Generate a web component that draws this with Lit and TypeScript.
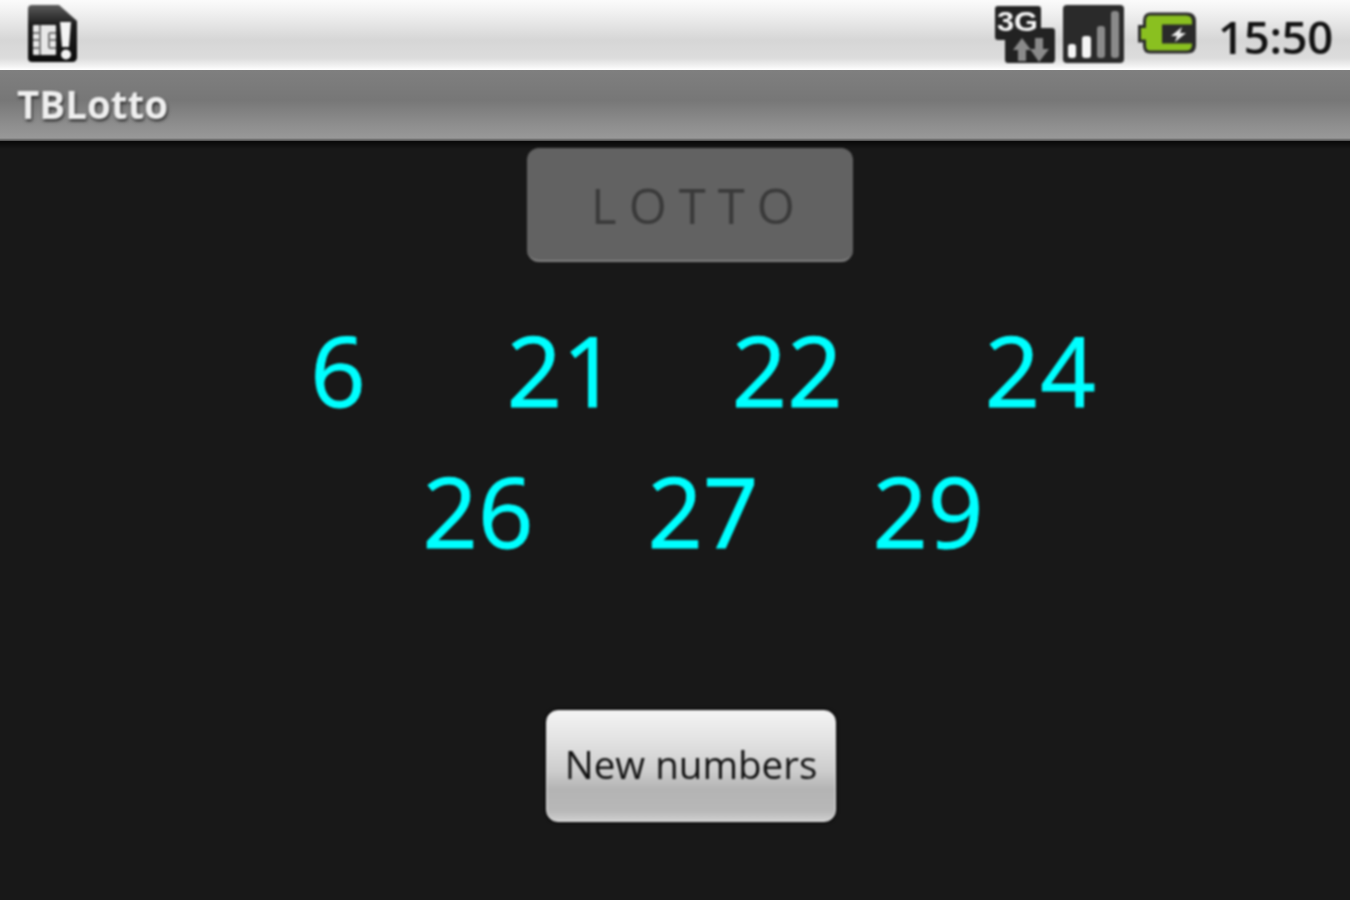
import { LitElement, html, css } from 'lit';
import { customElement } from 'lit/decorators.js';

// each number carries the gap to the one before it, the source layout is uneven
const ROWS = [
  [
    { n: '6', gap: 0 },
    { n: '21', gap: 141 },
    { n: '22', gap: 114 },
    { n: '24', gap: 142 },
  ],
  [
    { n: '26', gap: 0 },
    { n: '27', gap: 114 },
    { n: '29', gap: 114 },
  ],
];

@customElement('app-root')
export class AppRoot extends LitElement {
  static styles = css`
    :host {
      display: block;
      width: 1350px;
      height: 900px;
      overflow: hidden;
      background: #181818;
      font-family: 'Open Sans', 'Noto Sans', sans-serif;
    }
    .screen {
      height: 900px;
      display: flex;
      flex-direction: column;
    }
    /* the reference is an upscaled phone capture, everything but the bars is soft */
    .icon,
    .time,
    .label,
    .lotto,
    .row,
    .new {
      filter: blur(1px);
    }
    .status {
      height: 70px;
      box-sizing: border-box;
      flex: none;
      display: flex;
      align-items: center;
      padding: 0 17px 3px 27px;
      background: linear-gradient(#fbfbfb 0, #f1f1f1 12px, #d6d6d6 40px, #dcdcdc 58px, #f2f2f2 66px, #ffffff 70px);
    }
    .spacer {
      flex: 1;
    }
    .icon {
      display: block;
      flex: none;
    }
    .sim {
      width: 52px;
      height: 60px;
    }
    .net {
      width: 62px;
      height: 60px;
      margin-right: 7px;
    }
    .signal {
      width: 64px;
      height: 60px;
      margin-right: 11px;
    }
    .battery {
      width: 62px;
      height: 48px;
      margin-right: 18px;
    }
    .time {
      font-size: 45.5px;
      font-weight: 600;
      letter-spacing: -0.3px;
      color: #111;
      line-height: 60px;
      margin-top: 5px;
    }
    .title {
      height: 71px;
      box-sizing: border-box;
      flex: none;
      display: flex;
      align-items: center;
      padding: 0 0 3px 17px;
      background: linear-gradient(#7f7f7f 0, #777 30px, #8e8e8e 55px, #989898 68px, #4a4a4a 71px);
      color: #efefef;
      font-size: 38.5px;
      font-weight: 700;
      text-shadow: 1px 2px 3px #222;
    }
    .content {
      flex: 1;
      display: flex;
      flex-direction: column;
      align-items: center;
      background: linear-gradient(#080808 0, #181818 8px);
    }
    .lotto {
      box-sizing: border-box;
      width: 326px;
      height: 114px;
      margin-top: 7px;
      margin-left: 29px;
      display: flex;
      align-items: center;
      justify-content: center;
      padding: 2px 0 0 19px;
      border-radius: 12px;
      border-bottom: 2px solid #808080;
      background: #626262;
      color: #3a3a3a;
      font-size: 49px;
      letter-spacing: 12px;
    }
    .numbers {
      margin-top: 38px;
      margin-left: 56px;
      display: flex;
      flex-direction: column;
      align-items: center;
      gap: 2px;
    }
    .row {
      display: flex;
      height: 139px;
      align-items: center;
      color: #00ffff;
      font-size: 97px;
      line-height: 139px;
      -webkit-text-stroke: 1px #00ffff;
    }
    .new {
      box-sizing: border-box;
      width: 290px;
      height: 112px;
      margin-top: 130px;
      margin-left: 32px;
      display: flex;
      align-items: center;
      justify-content: center;
      padding-bottom: 4px;
      border-radius: 12px;
      border: 1px solid #eee;
      background: linear-gradient(#f4f4f4 0, #e2e2e2 30px, #cdcdcd 60px, #b4b4b4 78px, #b8b8b8 100px, #d4d4d4 112px);
      box-shadow: 0 0 2px 1px #000;
      color: #111;
      font-size: 38.5px;
    }
    .net-label {
      font-family: 'Liberation Sans', sans-serif;
      font-size: 27px;
      font-weight: 700;
      fill: #f6f6f6;
    }
  `;

  render() {
    return html`
      <div class="screen">
        <div class="status">
          ${this.simIcon()}
          <div class="spacer"></div>
          ${this.netIcon()} ${this.signalIcon()} ${this.batteryIcon()}
          <div class="time">15:50</div>
        </div>
        <div class="title"><span class="label">TBLotto</span></div>
        <div class="content">
          <div class="lotto">LOTTO</div>
          <div class="numbers">
            ${ROWS.map(
              (row) => html`
                <div class="row">
                  ${row.map((item) => html`<span style="margin-left:${item.gap}px">${item.n}</span>`)}
                </div>
              `,
            )}
          </div>
          <div class="new">New numbers</div>
        </div>
      </div>
    `;
  }

  simIcon() {
    return html`
      <svg class="icon sim" viewBox="0 0 52 60">
        <defs>
          <linearGradient id="simBody" x1="0" y1="0" x2="0" y2="1">
            <stop offset="0" stop-color="#5a5a5a" />
            <stop offset="0.35" stop-color="#1c1c1c" />
            <stop offset="1" stop-color="#0c0c0c" />
          </linearGradient>
        </defs>
        <path d="M1 5q0-4 4-4h27l18 16v36q0 5-5 5H5q-4 0-4-4z" fill="url(#simBody)" />
        <rect x="6" y="21" width="23" height="30" rx="1" fill="#e8e8e8" />
        <path d="M6 29h7M22 29h7M6 36h7M22 36h7M6 44h7M22 44h7M13 21v30M22 29v15" stroke="#777" stroke-width="2" />
        <path d="M33 18h11l-2 25h-7z" fill="#f4f4f4" />
        <circle cx="39" cy="50.5" r="5" fill="#f4f4f4" />
      </svg>
    `;
  }

  netIcon() {
    return html`
      <svg class="icon net" viewBox="0 0 62 60">
        <path d="M1 5q0-3 3-3h40q3 0 3 3v19h11q3 0 3 3v28q0 4-3 4H14q-3 0-3-3V36H4q-3 0-3-3z" fill="#222" />
        <text class="net-label" x="3" y="27" textLength="41" lengthAdjust="spacingAndGlyphs">3G</text>
        <path d="M24 57V46h-5l9-12 9 12h-5v11z" fill="#8a8a8a" />
        <path d="M41 34h8v11h6l-10 13-9-13h5z" fill="#8a8a8a" />
      </svg>
    `;
  }

  signalIcon() {
    return html`
      <svg class="icon signal" viewBox="0 0 64 60">
        <rect x="0" y="1" width="61" height="58" rx="4" fill="#2a2a2a" />
        <rect x="5" y="40" width="8" height="14" rx="3" fill="#f6f6f6" />
        <rect x="19" y="32" width="9" height="22" rx="3" fill="#f6f6f6" />
        <rect x="34" y="22" width="8" height="32" rx="3" fill="#8a8a8a" />
        <rect x="48" y="7" width="8" height="47" rx="3" fill="#8a8a8a" />
      </svg>
    `;
  }

  batteryIcon() {
    return html`
      <svg class="icon battery" viewBox="0 0 62 48">
        <path d="M12 2.5h37q9 0 9 9v24q0 8-9 8H12q-7 0-7-8v-3H0V15h5v-4q0-8 7-8.500z" fill="#2a2a2a" />
        <path d="M12 5.500h36q6 0 6 6v3H24v19h30v1q0 6-6 6H12q-4 0-4-5v-6H3V18h5v-7q0-5.500 4-5.500z" fill="#8ac020" />
        <path d="M33 26l11-9-2 6h6l-11 9 2-6z" fill="#eee" />
      </svg>
    `;
  }
}
